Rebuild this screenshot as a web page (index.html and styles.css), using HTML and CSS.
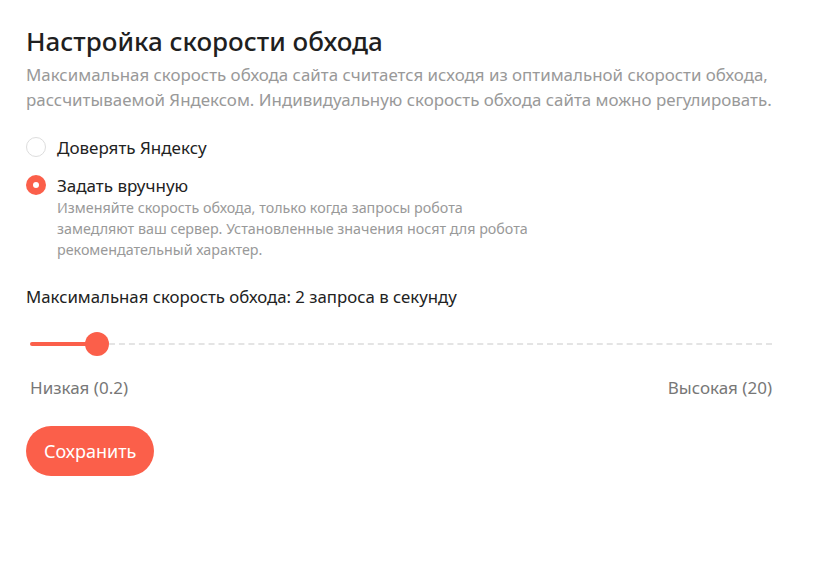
FILE: index.html
```html
<!DOCTYPE html>
<html lang="ru">
<head>
    <meta charset="UTF-8">
    <meta name="viewport" content="width=device-width, initial-scale=1.0">
    <title>Настройка скорости обхода</title>
    <link rel="stylesheet" href="styles.css">
</head>
<body>
    <div class="crawl-settings">
        <h1 class="crawl-title">Настройка скорости обхода</h1>
        <p class="crawl-desc">Максимальная скорость обхода сайта считается исходя из оптимальной скорости обхода, рассчитываемой Яндексом. Индивидуальную скорость обхода сайта можно регулировать.</p>

        <div class="radio-group" role="radiogroup">
            <label class="radio">
                <span class="radio-circle"></span>
                <span class="radio-label">Доверять Яндексу</span>
            </label>
            <label class="radio radio-checked">
                <span class="radio-circle"></span>
                <span class="radio-label">Задать вручную</span>
            </label>
            <p class="radio-hint">Изменяйте скорость обхода, только когда запросы робота замедляют ваш сервер. Установленные значения носят для робота рекомендательный характер.</p>
        </div>

        <div class="speed">
            <div class="speed-title">Максимальная скорость обхода: 2 запроса в секунду</div>
            <div class="slider" role="slider" aria-valuemin="0.2" aria-valuemax="20" aria-valuenow="2">
                <div class="slider-fill" style="width: 67px"></div>
                <div class="slider-thumb"></div>
                <div class="slider-rest"></div>
            </div>
            <div class="slider-labels">
                <span>Низкая (0.2)</span>
                <span>Высокая (20)</span>
            </div>
        </div>

        <button class="save-button">Сохранить</button>
    </div>
</body>
</html>
```

FILE: styles.css
```css
body {
    margin: 0;
    background: #fff;
    font-family: "Noto Sans", "Open Sans", sans-serif;
    color: #222;
}

.crawl-settings {
    padding: 24px 26px;
    width: 785px;
}

.crawl-title {
    margin: 0;
    font-size: 26px;
    font-weight: 500;
    line-height: 34px;
    color: #1f1f1f;
}

.crawl-desc {
    margin: 4px 0 0;
    font-size: 16.9px;
    line-height: 25px;
    color: #999;
}

.radio-group {
    margin-top: 23px;
}

.radio {
    display: flex;
    align-items: center;
    gap: 11px;
    height: 24px;
    margin-bottom: 14px;
    cursor: pointer;
}

.radio-circle {
    box-sizing: border-box;
    width: 20px;
    height: 20px;
    border: 1px solid #ddd;
    border-radius: 50%;
    flex-shrink: 0;
    display: flex;
    align-items: center;
    justify-content: center;
}

.radio-checked {
    margin-bottom: 0;
}

.radio-checked .radio-circle {
    border: none;
    background: #fb5f4a;
}

.radio-checked .radio-circle::after {
    content: "";
    width: 6px;
    height: 6px;
    border-radius: 50%;
    background: #fff;
}

.radio-label {
    font-size: 17px;
    color: #222;
}

.radio-hint {
    margin: 0 0 0 31px;
    max-width: 472px;
    font-size: 14.3px;
    line-height: 21px;
    color: #999;
}

.speed {
    margin-top: 25px;
    width: 746px;
}

.speed-title {
    font-size: 16.8px;
    line-height: 24px;
}

.slider {
    display: flex;
    align-items: center;
    height: 24px;
    margin: 23px 0 0 4px;
}

.slider-fill {
    height: 4px;
    background: #fb5f4a;
    border-radius: 2px;
    margin-right: -12px;
}

.slider-thumb {
    width: 24px;
    height: 24px;
    border-radius: 50%;
    background: #fb5f4a;
    position: relative;
    flex-shrink: 0;
}

.slider-rest {
    flex: 1;
    height: 0;
    border-top: 2px dashed #e4e4e4;
}

.slider-labels {
    display: flex;
    justify-content: space-between;
    margin: 20px 0 0 4px;
    font-size: 17px;
    line-height: 24px;
    color: #777;
}

.save-button {
    margin-top: 26px;
    height: 50px;
    padding: 0 18px;
    border: none;
    border-radius: 25px;
    background: #fb5f4a;
    color: #fff;
    font-family: inherit;
    font-size: 18px;
    cursor: pointer;
}
```
